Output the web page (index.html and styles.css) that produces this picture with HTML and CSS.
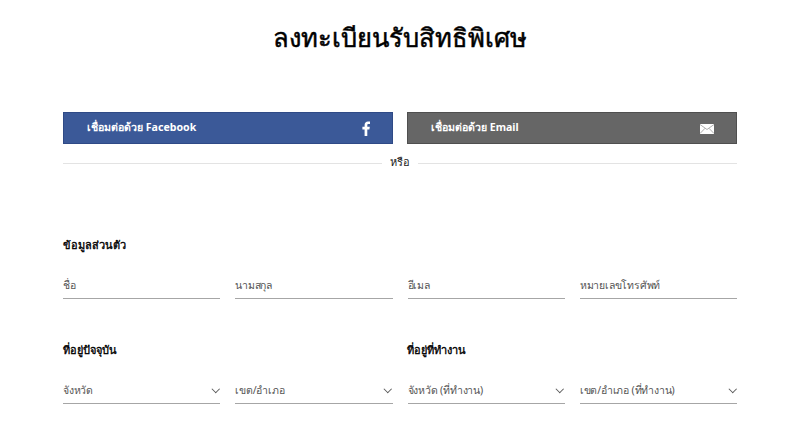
FILE: index.html
```html
<!DOCTYPE html>
<html lang="th">

<head>
    <meta charset="UTF-8">
    <meta name="viewport" content="width=device-width, initial-scale=1.0">
    <title>ลงทะเบียนรับสิทธิพิเศษ</title>
    <link rel="stylesheet" href="styles.css">
</head>

<body>
    <h1 class="page-title">ลงทะเบียนรับสิทธิพิเศษ</h1>
    <div class="container">
        <div class="connect-group">
            <a class="connect-btn connect-fb" href="#">
                <span>เชื่อมต่อด้วย Facebook</span>
                <svg class="fb-icon" width="8" height="15" viewBox="0 0 8 15">
                    <path d="M5.3 15V8.4h2.1l.4-2.6H5.3V4.2c0-.8.3-1.3 1.3-1.3H8V.6C7.700.5 6.900.4 6 .4 4 .4 2.600 1.600 2.600 3.900v1.900H.4v2.600h2.200V15z" fill="#fff" />
                </svg>
            </a>
            <a class="connect-btn connect-email" href="#">
                <span>เชื่อมต่อด้วย Email</span>
                <svg class="mail-icon" width="14" height="10" viewBox="0 0 14 10">
                    <rect width="14" height="10" fill="#fff" />
                    <path d="M0 .5l7 5 7-5M0 9.500l5-5.200M14 9.500L9 4.300" fill="none" stroke="#999" stroke-width=".8" />
                </svg>
            </a>
        </div>

        <div class="divider"><span>หรือ</span></div>

        <h2 class="section-title first">ข้อมูลส่วนตัว</h2>
        <div class="field-row">
            <div class="field">ชื่อ</div>
            <div class="field">นามสกุล</div>
            <div class="field">อีเมล</div>
            <div class="field">หมายเลขโทรศัพท์</div>
        </div>

        <div class="address-titles">
            <h2 class="section-title">ที่อยู่ปัจจุบัน</h2>
            <h2 class="section-title">ที่อยู่ที่ทำงาน</h2>
        </div>
        <div class="field-row">
            <div class="field select">จังหวัด</div>
            <div class="field select">เขต/อำเภอ</div>
            <div class="field select">จังหวัด (ที่ทำงาน)</div>
            <div class="field select">เขต/อำเภอ (ที่ทำงาน)</div>
        </div>
    </div>
</body>

</html>
```

FILE: styles.css
```css
body {
    margin: 0;
    font-family: "Noto Sans", "Open Sans", sans-serif;
    background-color: #fff;
    color: #000;
    overflow: hidden;
}

.page-title {
    margin: 0;
    padding-top: 17px;
    height: 41px;
    line-height: 40px;
    font-size: 25.500px;
    font-weight: 400;
    -webkit-text-stroke: 0.5px #000;
    text-align: center;
}

.container {
    margin: 0 63px;
    padding-top: 54px;
}

.connect-group {
    display: grid;
    grid-template-columns: 1fr 1fr;
    gap: 14px;
}

.connect-btn {
    display: flex;
    align-items: center;
    justify-content: space-between;
    height: 30px;
    padding: 0 22px 0 23px;
    border: 1px solid #2f4a86;
    background: #3b5998;
    color: #fff;
    font-size: 10.600px;
    font-weight: 700;
    text-decoration: none;
}

.connect-btn span {
    margin-top: -2px;
}

.connect-email {
    border-color: #4f4f4f;
    background: #666;
}

.fb-icon {
    margin-top: 1px;
}

.mail-icon {
    margin-top: 1px;
}

.divider {
    position: relative;
    margin-top: 19px;
    height: 1px;
    background: #e3e3e3;
    text-align: center;
}

.divider span {
    position: relative;
    top: -14px;
    padding: 0 8px;
    background: #fff;
    font-size: 11px;
    line-height: 16px;
    color: #222;
}

.section-title {
    margin: 0;
    font-size: 11px;
    font-weight: 400;
    -webkit-text-stroke: 0.35px #000;
    line-height: 16px;
}

.section-title.first {
    margin-top: 73px;
}

.field-row {
    display: grid;
    grid-template-columns: repeat(4, 1fr);
    gap: 15px;
    margin-top: 17px;
}

.field {
    height: 28px;
    line-height: 30px;
    border-bottom: 1px solid #a6a6a6;
    font-size: 10.500px;
    letter-spacing: -0.2px;
    color: #555;
}

.select {
    line-height: 31px;
    position: relative;
}

.select::after {
    content: "";
    position: absolute;
    right: 2px;
    top: 11px;
    width: 4.500px;
    height: 4.500px;
    border-right: 1.300px solid #555;
    border-bottom: 1.300px solid #555;
    transform: rotate(45deg);
}

.address-titles {
    display: grid;
    grid-template-columns: 1fr 1fr;
    gap: 14px;
    margin-top: 43px;
}
```
